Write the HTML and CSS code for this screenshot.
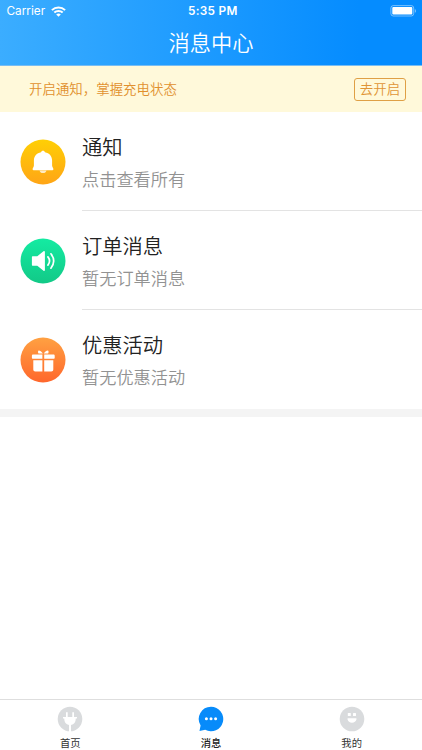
FILE: index.html
```html
<!DOCTYPE html>
<html lang="zh-CN">
<head>
<meta charset="utf-8">
<title>消息中心</title>
<link rel="stylesheet" href="styles.css">
</head>
<body>
<header class="header">
  <div class="status">
    <div class="carrier"><span>Carrier</span>
      <svg class="wifi" width="15" height="11" viewBox="0 0 15 11"><g fill="none" stroke="#fff" stroke-width="2"><path d="M.9 4.100a9.500 9.500 0 0 1 13.200 0"/><path d="M3.300 6.600a6.100 6.100 0 0 1 8.400 0"/></g><path fill="#fff" d="M5.200 8.500a3.300 3.300 0 0 1 4.600 0L7.500 10.800z"/></svg>
    </div>
    <time class="time">5:35 PM</time>
    <svg class="battery" width="27" height="12" viewBox="0 0 27 12"><rect x=".9" y=".6" width="22.800" height="10.400" rx="2.400" fill="none" stroke="#fff" stroke-opacity=".45"/><rect x="2.300" y="2" width="20" height="7.600" rx="1" fill="#fff"/><path d="M24.800 4v3.800q1.300-.5 1.300-1.900T24.800 4z" fill="#fff" fill-opacity=".45"/></svg>
  </div>
  <h1 class="heading">消息中心</h1>
</header>
<section class="notice"><span>开启通知，掌握充电状态</span><button class="enable">去开启</button></section>
<main class="list">
  <article class="row">
    <svg class="icon" viewBox="0 0 46 46"><defs><linearGradient id="yellow" x2="0" y2="1"><stop stop-color="#ffcf05"/><stop offset="1" stop-color="#ffa516"/></linearGradient></defs><circle cx="23" cy="23" r="22.500" fill="url(#yellow)"/><path fill="#fff" d="M23 11.800c1.100 0 1.700.6 2 1.500 4.300.8 7.100 4 7.100 8.200v5.100c0 1.600 1.300 2.300 1.300 3.700 0 .6-.4.900-1 .9H13.600c-.6 0-1-.3-1-.9 0-1.400 1.300-2.100 1.300-3.700v-5.100c0-4.200 2.800-7.400 7.100-8.200.3-.9.900-1.500 2-1.500z"/><path fill="#fff" fill-opacity=".75" d="M19.500 31.500h7c-.4 1.600-1.700 2.600-3.500 2.600s-3.100-1-3.500-2.600z"/></svg>
    <div class="content"><h2>通知</h2><p>点击查看所有</p></div>
  </article>
  <article class="row">
    <svg class="icon" viewBox="0 0 46 46"><defs><linearGradient id="green" x2="0" y2="1"><stop stop-color="#14eba2"/><stop offset="1" stop-color="#12c987"/></linearGradient></defs><circle cx="23" cy="23" r="22.500" fill="url(#green)"/><path fill="#fff" d="M12.900 18.200h4.400l6.200-4.900c.7-.5 1.400-.3 1.400.7v18c0 1-.7 1.200-1.400.7l-6.200-4.900h-4.400c-.7 0-1-.4-1-1v-7.600c0-.6.300-1 1-1z"/><g fill="none" stroke="#fff" stroke-width="1.700" stroke-linecap="round"><path d="M27.900 18.900q3.300 4.100 0 8.200"/><path d="M30.900 15.800q5.600 7.200 0 14.400"/></g></svg>
    <div class="content"><h2>订单消息</h2><p>暂无订单消息</p></div>
  </article>
  <article class="row">
    <svg class="icon" viewBox="0 0 46 46"><defs><linearGradient id="orange" x2="0" y2="1"><stop stop-color="#ffa142"/><stop offset="1" stop-color="#ff672c"/></linearGradient></defs><circle cx="23" cy="23" r="22.500" fill="url(#orange)"/><g fill="#fff"><path d="M22.900 16.500h-4.400c-.7-1-.6-2.400.1-3 1.900.3 3.300 1.400 4.300 3zM23.700 16.500h4.400c.7-1 .6-2.400-.1-3-1.900.3-3.300 1.400-4.300 3z"/><path d="M13.200 17.500h9.200v4.200H12.700c-.5 0-.8-.3-.8-.8V18.800c0-.8.500-1.300 1.300-1.300zM24.200 17.500h9.200c.8 0 1.300.5 1.300 1.300v2.100c0 .5-.3.800-.8.800h-9.700z"/><path d="M13.300 23.300h9.100v11.100h-7.100c-1.200 0-2-.8-2-2zM24.200 23.300h9.100v9.100c0 1.200-.8 2-2 2h-7.100z"/></g></svg>
    <div class="content"><h2>优惠活动</h2><p>暂无优惠活动</p></div>
  </article>
</main>
<nav class="tabs">
  <a class="tab"><svg viewBox="0 0 26 26"><circle cx="13" cy="13" r="12.300" fill="#d9dbdd"/><path fill="#fff" d="M9 6.300h1.700v4.700h4.600V6.300H17V11h3v1.500h-1.200c0 3.800-1.800 6-4.800 6.500V26h-2v-7c-3-.5-4.800-2.700-4.800-6.500H6V11h3z"/></svg><span>首页</span></a>
  <a class="tab active"><svg viewBox="0 0 26 26"><path fill="#078bfa" d="M13 .8a12.200 12.200 0 1 1-5.800 22.900L1.500 25l1.100-5.600A12.200 12.200 0 0 1 13 .8z"/><g fill="#fff"><circle cx="8.400" cy="12.800" r="1.500"/><circle cx="13" cy="12.800" r="1.500"/><circle cx="17.600" cy="12.800" r="1.500"/></g></svg><span>消息</span></a>
  <a class="tab"><svg viewBox="0 0 26 26"><circle cx="13" cy="13" r="12.300" fill="#d9dbdd"/><g fill="#fff"><rect x="8.800" y="7" width="3" height="3" rx=".5"/><rect x="14" y="7" width="3" height="3" rx=".5"/><path d="M9.200 12.300h7.600c.6 0 .8.400.7.900-.5 2.200-2.200 3.600-4.500 3.600s-4-1.400-4.500-3.600c-.1-.5.100-.9.700-.9z"/></g></svg><span>我的</span></a>
</nav>
</body>
</html>
```

FILE: styles.css
```css
* { box-sizing: border-box; margin: 0; padding: 0; }
body { width: 422px; height: 750px; display: flex; flex-direction: column; background: #fff; overflow: hidden; font-family: Inter, "Noto Sans CJK SC", sans-serif; font-weight: 350; }
.header { flex: none; height: 66px; background: linear-gradient(90deg, #3badff, #058cff 85%); color: #fff; border-bottom: 1px solid #79bdf2; }
.status { height: 22px; display: grid; grid-template-columns: 1fr auto 1fr; align-items: center; padding: 0 5px 0 6.500px; }
.carrier { display: flex; align-items: center; gap: 6px; font-size: 11.800px; font-weight: 400; }
.time { font-size: 11.800px; font-weight: 600; letter-spacing: .3px; padding-left: 2px; }
.battery { justify-self: end; }
.heading { height: 42px; line-height: 42px; text-align: center; font-size: 21.200px; font-weight: 350; }
.notice { flex: none; height: 46px; display: flex; align-items: center; justify-content: space-between; padding: 0 16px 0 29px; background: #fff9da; color: #e1902d; font-size: 13.450px; }
.notice span { padding-bottom: 3px; }
.enable { width: 52px; height: 23px; border: 1px solid #dfa045; border-radius: 3px; background: none; color: #df9435; font: inherit; line-height: 20px; }
.list { flex: none; height: 305px; border-bottom: 8px solid #f4f4f4; }
.row { height: 99px; display: flex; align-items: center; padding-left: 20px; gap: 16px; }
.icon { width: 46px; height: 46px; flex: none; }
.content { flex: 1; height: 99px; padding-top: 20px; border-bottom: 1px solid #e3e3e3; }
.row:last-child .content { border-bottom: 0; }
.content h2 { height: 31px; line-height: 31px; font-size: 20.300px; font-weight: 350; color: #222; }
.content p { height: 34px; line-height: 34px; font-size: 17.200px; color: #929292; }
.tabs { height: 51px; margin-top: auto; border-top: 1px solid #dedede; display: grid; grid-template-columns: repeat(3, 1fr); }
.tab { display: flex; flex-direction: column; align-items: center; padding-top: 6px; font-size: 10.300px; font-weight: 400; color: #333; }
.tab svg { width: 26px; height: 26px; }
.tab span { line-height: 14px; margin-top: 4px; }
.tab.active { color: #222; font-weight: 500; }
```
